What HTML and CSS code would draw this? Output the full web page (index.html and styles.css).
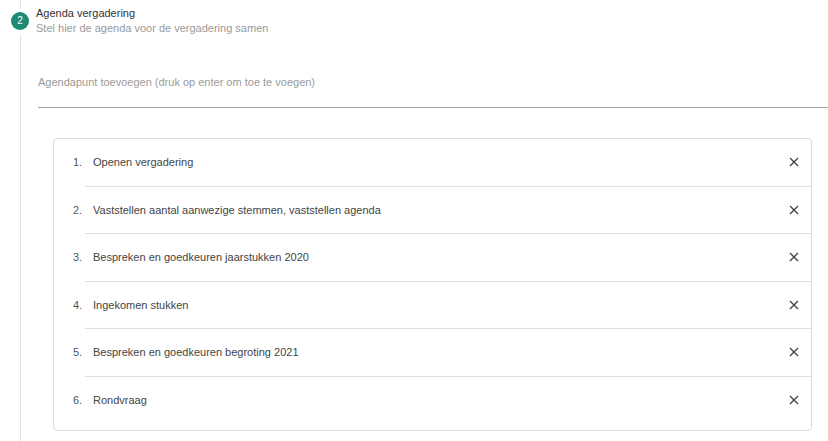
FILE: index.html
```html
<!DOCTYPE html>
<html lang="nl">
<head>
  <meta charset="UTF-8" />
  <meta name="viewport" content="width=device-width, initial-scale=1" />
  <title>Agenda vergadering</title>
  <link rel="stylesheet" href="styles.css">
</head>
<body>
  <section class="step">
    <div class="step-rail">
      <div class="rail-top"></div>
      <div class="step-badge">2</div>
      <div class="rail-line"></div>
    </div>

    <div class="step-body">
      <h2 class="step-title">Agenda vergadering</h2>
      <p class="step-sub">Stel hier de agenda voor de vergadering samen</p>

      <div class="field">
        <input type="text" placeholder="Agendapunt toevoegen (druk op enter om toe te voegen)">
      </div>

      <ol class="agenda">
        <li class="agenda-item"><span class="num">1.</span><span class="label">Openen vergadering</span><button class="remove" title="Verwijderen"><svg viewBox="0 0 10 10" width="10" height="10"><path d="M1 1L9 9M9 1L1 9" /></svg></button></li>
        <li class="agenda-item"><span class="num">2.</span><span class="label">Vaststellen aantal aanwezige stemmen, vaststellen agenda</span><button class="remove" title="Verwijderen"><svg viewBox="0 0 10 10" width="10" height="10"><path d="M1 1L9 9M9 1L1 9" /></svg></button></li>
        <li class="agenda-item"><span class="num">3.</span><span class="label">Bespreken en goedkeuren jaarstukken 2020</span><button class="remove" title="Verwijderen"><svg viewBox="0 0 10 10" width="10" height="10"><path d="M1 1L9 9M9 1L1 9" /></svg></button></li>
        <li class="agenda-item"><span class="num">4.</span><span class="label">Ingekomen stukken</span><button class="remove" title="Verwijderen"><svg viewBox="0 0 10 10" width="10" height="10"><path d="M1 1L9 9M9 1L1 9" /></svg></button></li>
        <li class="agenda-item"><span class="num">5.</span><span class="label">Bespreken en goedkeuren begroting 2021</span><button class="remove" title="Verwijderen"><svg viewBox="0 0 10 10" width="10" height="10"><path d="M1 1L9 9M9 1L1 9" /></svg></button></li>
        <li class="agenda-item"><span class="num">6.</span><span class="label">Rondvraag</span><button class="remove" title="Verwijderen"><svg viewBox="0 0 10 10" width="10" height="10"><path d="M1 1L9 9M9 1L1 9" /></svg></button></li>
      </ol>
    </div>
  </section>
</body>
</html>
```

FILE: styles.css
```css
body {
  font-family: "Liberation Sans", Arial, sans-serif;
  background-color: #fff;
  color: #333;
  margin: 0; padding: 0;
}
.step {
  display: flex;
  min-height: 441px;
}
.step-rail {
  width: 18px;
  margin-left: 11px;
  margin-right: 7px;
  display: flex;
  flex-direction: column;
  align-items: center;
}
.rail-top {
  width: 1px;
  height: 9px;
  margin-bottom: 3px;
  background-color: #e0e0e0;
}
.rail-line {
  width: 1px;
  flex: 1;
  margin-top: 5px;
  background-color: #e0e0e0;
}
.step-badge {
  width: 18px;
  height: 18px;
  border-radius: 50%;
  background-color: #1e8c74;
  color: white;
  font-size: 10px;
  line-height: 18px;
  text-align: center;
}
.step-body {
  flex: 1;
  padding-top: 6px;
}
.step-title {
  margin: 0;
  font-size: 11px;
  font-weight: normal;
  line-height: 15px;
  color: #333;
}
.step-sub {
  margin: 0;
  font-size: 11px;
  line-height: 15px;
  color: #9a9a9a;
}
.field {
  margin: 39px 0 0 2px;
  padding-bottom: 17px;
  border-bottom: 1px solid #a8a8a8;
}
.field input {
  display: block;
  width: 100%;
  border: none;
  outline: none;
  padding: 0;
  font-family: inherit;
  font-size: 11px;
  line-height: 15px;
  color: #333;
  background: transparent;
}
.field input::placeholder {
  color: #9a9a9a;
}
.agenda {
  list-style: none;
  margin: 30px 16px 0 17px;
  padding: 0 0 6px;
  border: 1px solid #dcdcdc;
  border-radius: 4px;
}
.agenda-item {
  display: flex;
  align-items: center;
  height: 47.5px;
  box-sizing: border-box;
  margin-left: 31px;
  border-bottom: 1px solid #e0e0e0;
  font-size: 11px;
  color: #444;
}
.agenda-item:last-child {
  border-bottom: none;
}
.num {
  width: 20px;
  margin-left: -12px;
  color: #555;
}
.label {
  flex: 1;
}
.remove {
  width: 24px;
  height: 24px;
  margin-right: 5px;
  padding: 0;
  border: none;
  background: none;
  cursor: pointer;
  display: flex;
  align-items: center;
  justify-content: center;
}
.remove svg path {
  stroke: #444;
  stroke-width: 1.4;
  fill: none;
}
```
